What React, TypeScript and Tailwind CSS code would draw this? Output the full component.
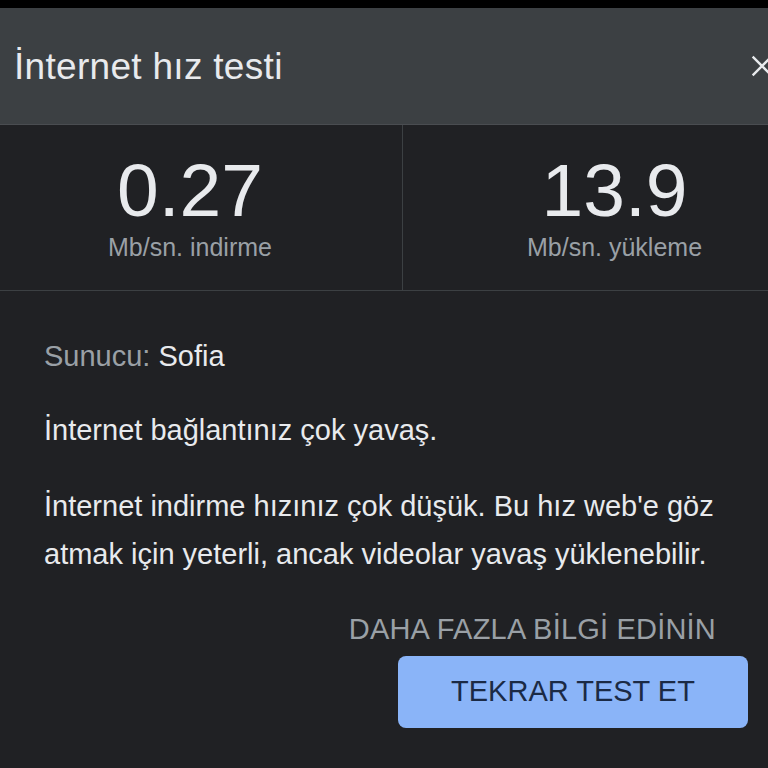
import React from 'react';

const font = { fontFamily: '"Liberation Sans", Arial, sans-serif' };

const Stat: React.FC<{ value: string; label: string; border?: boolean }> = ({ value, label, border }) => (
  <div className={`flex flex-col items-center pt-[28px] ${border ? 'border-l border-[#3c4043]' : ''}`}>
    <div className="text-[75px] leading-none text-[#e8eaed]">{value}</div>
    <div className="mt-[7px] text-[25px] leading-none text-[#9aa0a6]">{label}</div>
  </div>
);

const App: React.FC = () => {
  return (
    <div className="w-[768px] h-[768px] overflow-hidden bg-black pt-[8px]" style={font}>
      <div className="-ml-[22px] w-[848px] h-[760px] bg-[#202124]">
        <div className="h-[117px] bg-[#3c4043] flex items-center justify-between pl-[36px] pr-[50px] border-b border-[#4a4d51]">
          <h1 className="text-[37px] text-[#e8eaed] tracking-[0.3px] mt-[2px]">İnternet hız testi</h1>
          <svg width="28" height="28" viewBox="0 0 24 24" className="text-[#e8eaed]">
            <path d="M4 4L20 20M20 4L4 20" stroke="currentColor" strokeWidth="2" />
          </svg>
        </div>

        <div className="grid grid-cols-2 h-[166px] border-b border-[#3c4043]">
          <Stat value="0.27" label="Mb/sn. indirme" />
          <Stat value="13.9" label="Mb/sn. yükleme" border />
        </div>

        <div className="pl-[66px] pr-[78px] pt-[49px] text-[29px] text-[#e8eaed]">
          <p className="leading-[32px]">
            <span className="text-[#9aa0a6]">Sunucu: </span>Sofia
          </p>
          <p className="mt-[42px] leading-[32px]">İnternet bağlantınız çok yavaş.</p>
          <p className="mt-[36px] leading-[48px]">
            İnternet indirme hızınız çok düşük. Bu hız web'e göz atmak için yeterli, ancak videolar yavaş yüklenebilir.
          </p>
          <div className="mt-[37px] flex flex-col items-end">
            <button className="mr-[32px] text-[29px] leading-none text-[#9aa0a6] tracking-[0.2px]">
              DAHA FAZLA BİLGİ EDİNİN
            </button>
            <button className="mt-[12px] w-[350px] h-[72px] rounded-[8px] bg-[#8ab4f8] text-[29px] text-[#1b2a45]">
              TEKRAR TEST ET
            </button>
          </div>
        </div>
      </div>
    </div>
  );
};

export default App;
